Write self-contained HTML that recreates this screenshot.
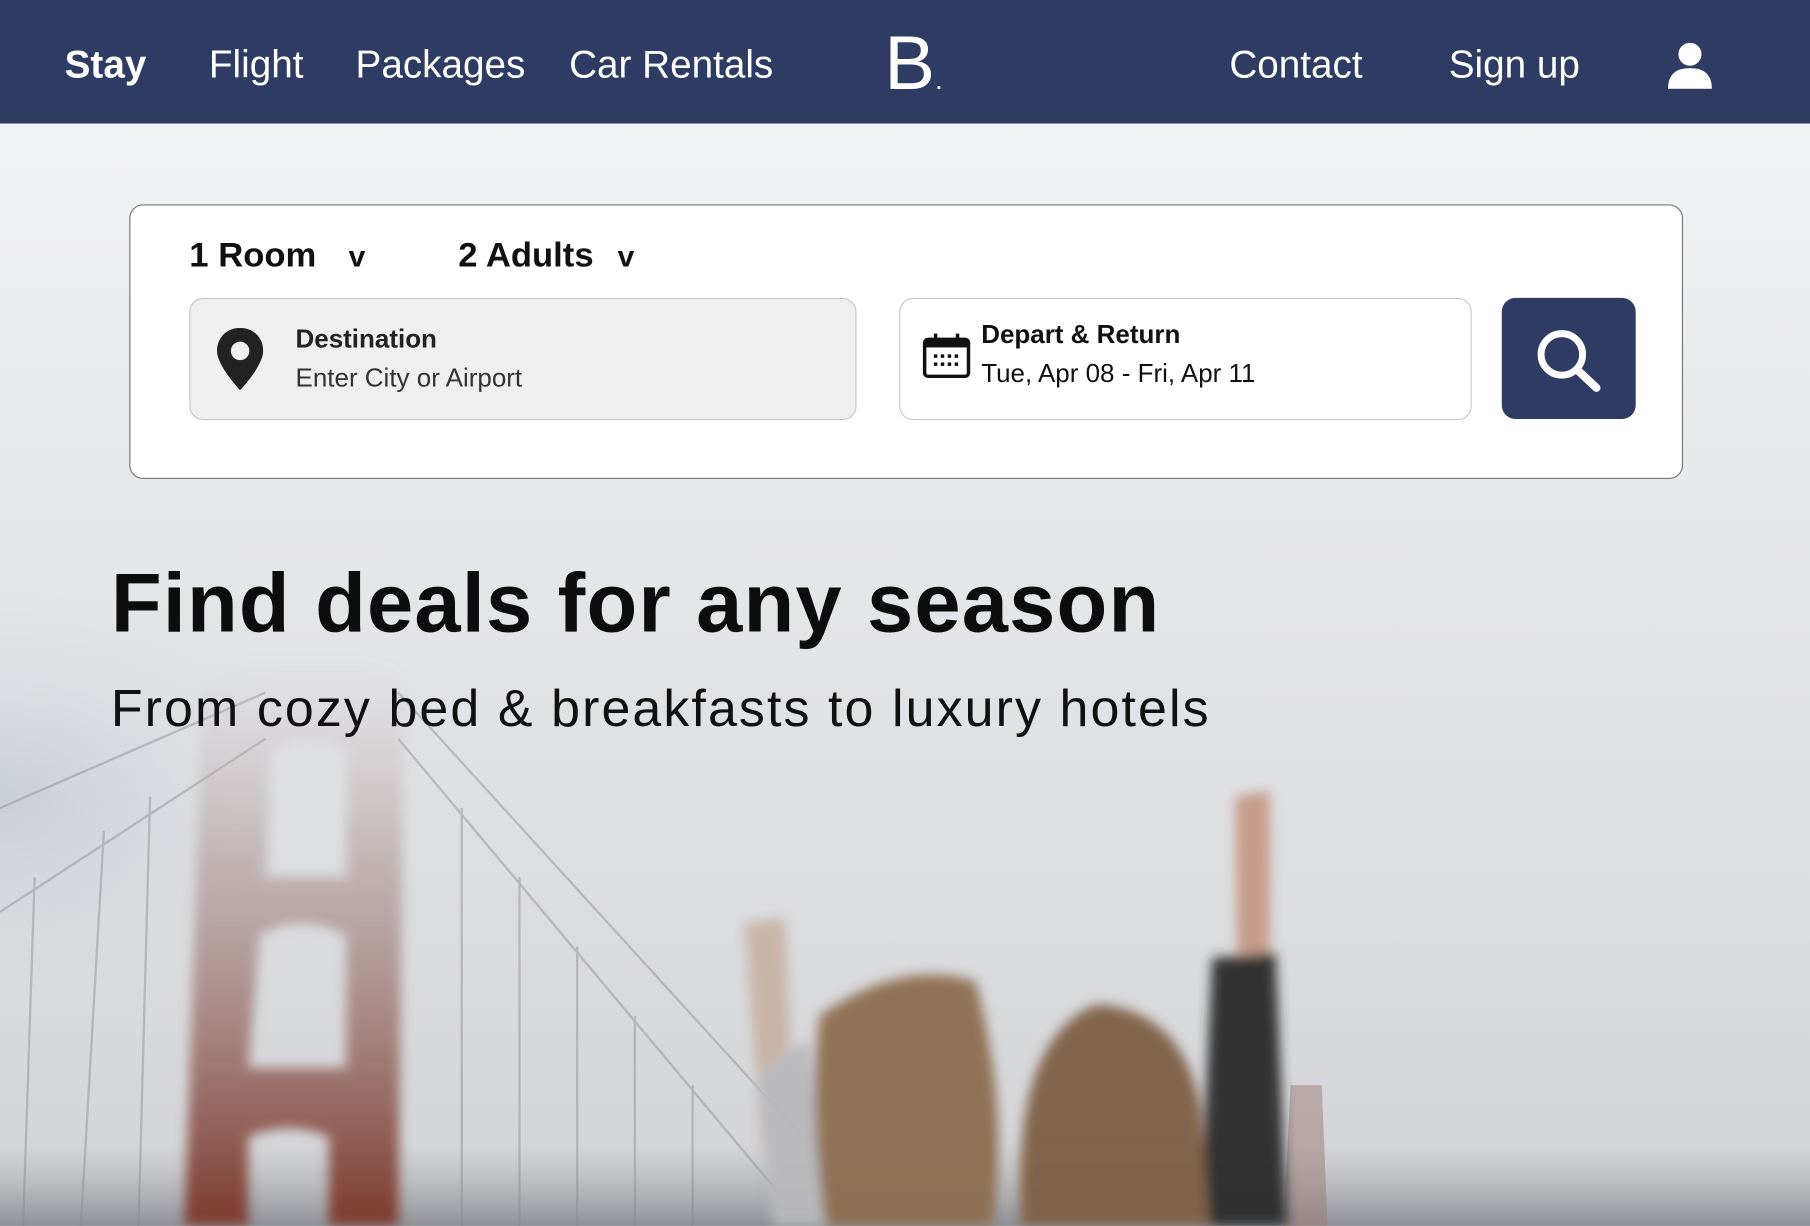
<!DOCTYPE html>
<html><head><meta charset="utf-8">
<style>
html,body{margin:0;padding:0;width:1810px;height:1226px;overflow:hidden;background:#e5e6e9;}
#w{position:absolute;left:0;top:0;width:1568px;height:1062px;transform:scale(1.15434);transform-origin:0 0;font-family:"Liberation Sans",sans-serif;overflow:hidden;}
.bg{position:absolute;left:0;top:0;}
nav{position:absolute;left:0;top:0;width:1568px;height:107px;background:#2e3b63;color:#fff;}
nav span{position:absolute;top:37px;font-size:33.5px;line-height:40px;}
.box{position:absolute;left:112px;top:177px;width:1344px;height:236px;background:#fff;border:1px solid #777;border-radius:12px;}
.sel{position:absolute;top:202px;font-size:30px;font-weight:bold;color:#111;line-height:40px;}
.f{position:absolute;top:258px;height:104px;border:1px solid #c8c8c8;border-radius:12px;}
h1{position:absolute;left:96px;top:482px;margin:0;font-size:72px;font-weight:bold;color:#0d0d0d;letter-spacing:1px;white-space:nowrap;}
h2{position:absolute;left:96px;top:588px;margin:0;font-size:45px;font-weight:normal;color:#111;white-space:nowrap;letter-spacing:1.8px;}
</style></head><body>
<div id="w">
<svg class="bg" width="1568" height="1062" viewBox="0 0 1568 1062">
<defs>
<linearGradient id="sky" x1="0" y1="0" x2="0" y2="1">
<stop offset="0" stop-color="#f4f5f7"/><stop offset="0.5" stop-color="#e4e5e8"/><stop offset="1" stop-color="#d2d3d6"/></linearGradient>
<radialGradient id="left" cx="0" cy="0.65" r="0.2">
<stop offset="0" stop-color="#bcc2cc" stop-opacity="0.6"/><stop offset="1" stop-color="#e0e2e6" stop-opacity="0"/></radialGradient>
<linearGradient id="tower" x1="0" y1="0" x2="0" y2="1">
<stop offset="0" stop-color="#c9bfc0" stop-opacity="0"/><stop offset="0.35" stop-color="#b09a98" stop-opacity="0.6"/><stop offset="1" stop-color="#7d3a2e"/></linearGradient>
<linearGradient id="city" x1="0" y1="0" x2="0" y2="1">
<stop offset="0" stop-color="#b0b2b6" stop-opacity="0"/><stop offset="1" stop-color="#8e9095"/></linearGradient>
<filter id="bl"><feGaussianBlur stdDeviation="5"/></filter>
</defs>
<rect width="1568" height="1062" fill="url(#sky)"/>
<rect x="0" y="0" width="1568" height="1062" fill="url(#left)"/>
<rect x="0" y="990" width="1568" height="72" fill="url(#city)"/>
<g stroke="#8c8a8e" stroke-width="2" opacity="0.45" fill="none">
<line x1="0" y1="700" x2="230" y2="600"/><line x1="0" y1="790" x2="230" y2="640"/>
<line x1="345" y1="640" x2="680" y2="1040"/><line x1="345" y1="600" x2="700" y2="990"/>
<line x1="30" y1="760" x2="20" y2="1062"/><line x1="90" y1="720" x2="70" y2="1062"/><line x1="130" y1="690" x2="120" y2="1062"/>
<line x1="400" y1="700" x2="400" y2="1062"/><line x1="450" y1="760" x2="450" y2="1062"/><line x1="500" y1="820" x2="500" y2="1062"/><line x1="550" y1="880" x2="550" y2="1062"/><line x1="600" y1="940" x2="600" y2="1062"/>
</g>
<path d="M160 1062 L175 600 L210 575 L235 570 L300 570 L340 580 L350 600 L345 1062 L285 1062 L285 985 Q250 970 215 985 L215 1062 Z M215 925 L300 925 L300 810 Q260 790 225 810 Z M230 760 L300 760 L300 650 Q265 635 235 650 Z" fill="url(#tower)" fill-rule="evenodd" filter="url(#bl)"/>
<path d="M1112 1062 L1118 940 L1145 940 L1150 1062 Z" fill="#9a7a74" opacity="0.5"/>
<g filter="url(#bl)" opacity="0.95">
<path d="M645 800 L680 795 L685 900 L660 1000 Z" fill="#c9b3a4"/>
<path d="M1070 690 L1100 685 L1100 830 L1072 830 Z" fill="#c49a86"/>
<path d="M1050 830 L1105 825 L1115 1062 L1040 1062 Z" fill="#2a2b2a"/>
<path d="M655 930 L700 900 L720 1062 L670 1062 Z" fill="#b9b9bb"/>
<path d="M710 880 Q780 830 845 850 Q875 960 860 1062 L715 1062 Q700 960 710 880 Z" fill="#8d6d50"/>
<path d="M885 1062 Q875 900 950 870 Q1025 875 1040 960 L1048 1062 Z" fill="#7e5e45"/>
</g>
</svg>
<nav>
<span style="left:56px;font-weight:bold;">Stay</span>
<span style="left:181px;">Flight</span>
<span style="left:308px;">Packages</span>
<span style="left:493px;">Car Rentals</span>
<span style="left:766px;top:21px;font-size:66px;line-height:66px;">B<span style="position:static;font-size:24px;">.</span></span>
<span style="left:1065px;">Contact</span>
<span style="left:1255px;">Sign up</span>
<svg style="position:absolute;left:1445px;top:37px" width="38" height="40" viewBox="0 0 38 40"><circle cx="19" cy="10" r="10" fill="#fff"/><path d="M0 40 Q0 22 19 22 Q38 22 38 40 Z" fill="#fff"/></svg>
</nav>
<div class="box"></div>
<div class="sel" style="left:164px">1 Room</div>
<div class="sel" style="left:302px;font-size:26px">v</div>
<div class="sel" style="left:397px">2 Adults</div>
<div class="sel" style="left:535px;font-size:26px">v</div>
<div class="f" style="left:164px;width:576px;background:#efefef;"></div>
<svg style="position:absolute;left:188px;top:284px" width="40" height="54" viewBox="0 0 40 54"><path d="M20 0 C8 0 0 9 0 20 C0 33 20 54 20 54 C20 54 40 33 40 20 C40 9 32 0 20 0 Z M20 12 A8 8 0 1 1 20 28 A8 8 0 1 1 20 12 Z" fill="#222" fill-rule="evenodd"/></svg>
<div style="position:absolute;left:256px;top:281px;font-size:22.5px;font-weight:bold;color:#222;">Destination</div>
<div style="position:absolute;left:256px;top:315px;font-size:22.5px;color:#333;">Enter City or Airport</div>
<div class="f" style="left:779px;width:494px;background:#fff;"></div>
<svg style="position:absolute;left:799px;top:288px" width="42" height="40" viewBox="0 0 42 40"><rect x="2" y="6" width="38" height="32" rx="3" fill="none" stroke="#111" stroke-width="3"/><rect x="2" y="6" width="38" height="7" fill="#111"/><rect x="10" y="1" width="3" height="8" fill="#111"/><rect x="29" y="1" width="3" height="8" fill="#111"/><g fill="#111"><rect x="10" y="19" width="3" height="3"/><rect x="16" y="19" width="3" height="3"/><rect x="22" y="19" width="3" height="3"/><rect x="28" y="19" width="3" height="3"/><rect x="10" y="26" width="3" height="3"/><rect x="16" y="26" width="3" height="3"/><rect x="22" y="26" width="3" height="3"/><rect x="28" y="26" width="3" height="3"/></g></svg>
<div style="position:absolute;left:850px;top:277px;font-size:22.5px;font-weight:bold;color:#111;">Depart &amp; Return</div>
<div style="position:absolute;left:850px;top:311px;font-size:22.5px;color:#111;">Tue, Apr 08 - Fri, Apr 11</div>
<div style="position:absolute;left:1301px;top:258px;width:116px;height:105px;background:#2e3b63;border-radius:12px;"></div>
<svg style="position:absolute;left:1330px;top:284px" width="58" height="56" viewBox="0 0 58 56"><circle cx="23" cy="23" r="18" fill="none" stroke="#fff" stroke-width="6"/><line x1="36" y1="36" x2="53" y2="52" stroke="#fff" stroke-width="7" stroke-linecap="round"/></svg>
<h1>Find deals for any season</h1>
<h2>From cozy bed &amp; breakfasts to luxury hotels</h2>
</div>
</body></html>
